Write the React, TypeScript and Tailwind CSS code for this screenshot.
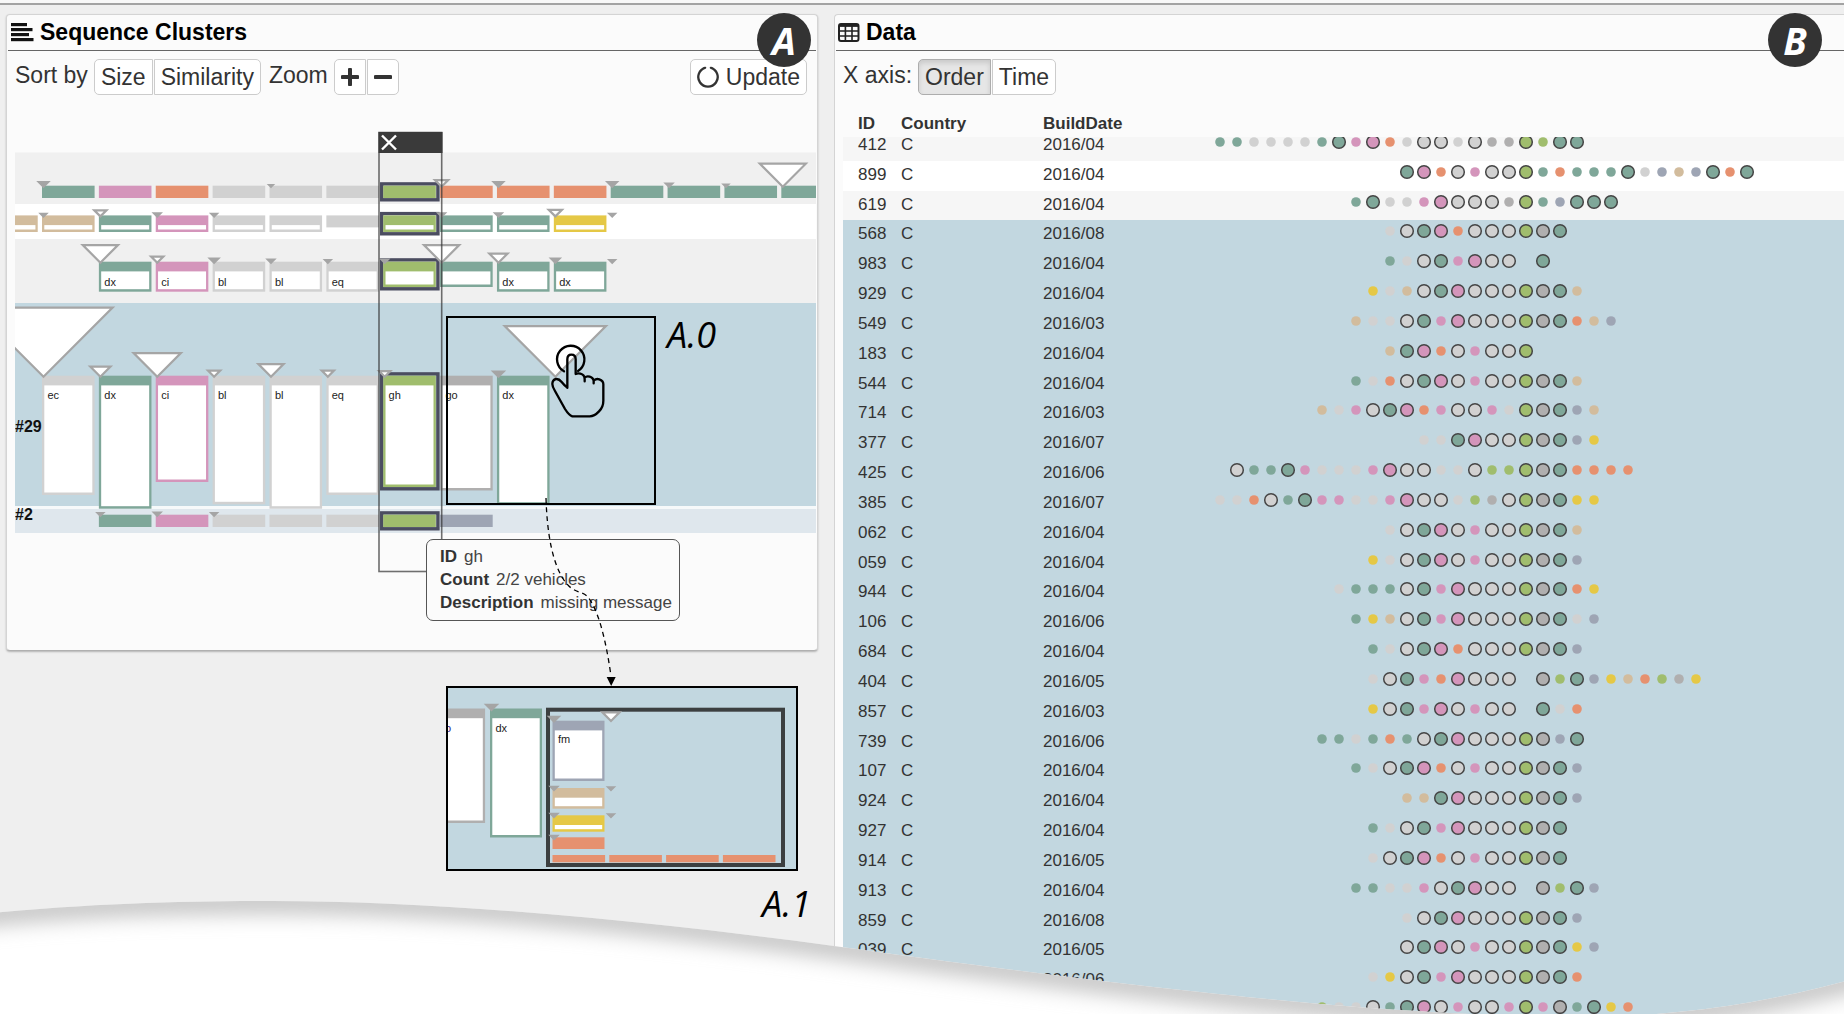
import { useLayoutEffect, useRef } from 'react';

const TEAL = '#7fa799';
const PINK = '#d495bb';
const ORANGE = '#e6916f';
const LIGHT = '#d1d1d1';
const DARK = '#b0afaf';
const GREEN = '#a0bd6d';
const YELLOW = '#e5c846';
const TAN = '#d2bc9d';
const SLATE = '#9ea5b4';

const DOT_COLORS: Record<string, string> = {
  t: TEAL,
  p: PINK,
  o: ORANGE,
  g: LIGHT,
  d: DARK,
  n: GREEN,
  y: YELLOW,
  b: TAN,
  s: SLATE,
};

/* ---------- Sequence cluster chart ---------- */

const COL_PITCH = 56.87;
const COL_WIDTH = 52.6;
const colX = (k: number) => 42 + COL_PITCH * k;

function Marker({ x, y, size }: { x: number; y: number; size: number }) {
  const h = Math.max(size - 2.4, 1);
  return (
    <polygon
      points={`${x - h},${y - h} ${x + h},${y - h} ${x},${y}`}
      fill={size < 8 ? '#a5a5a5' : '#fff'}
      stroke="#a5a5a5"
      strokeWidth={2.2}
    />
  );
}

type BarProps = {
  x: number;
  y: number;
  bottom: number;
  color: string;
  width?: number;
  hollow?: boolean;
  label?: string;
  labelY?: number;
  selected?: boolean;
};

function Bar({ x, y, bottom, color, width = COL_WIDTH, hollow, label, labelY, selected }: BarProps) {
  return (
    <g>
      {selected && (
        <rect
          x={x - 1.5}
          y={y - 1.8}
          width={width + 3.6}
          height={bottom - y + 3.6}
          fill="none"
          stroke="#4b4d60"
          strokeWidth={3.4}
        />
      )}
      <rect x={x} y={y} width={width} height={bottom - y} fill={color} />
      {hollow && (
        <rect x={x + 2.3} y={y + 9.7} width={width - 4.6} height={bottom - y - 12.2} fill="#fff" />
      )}
      {label && (
        <text x={x + 5.4} y={labelY} fontSize={11} fill="#222">
          {label}
        </text>
      )}
    </g>
  );
}

type Item = [col: number, color: string, bottom: number, hollow?: boolean, label?: string];
type Lane = { top: number; labelY?: number; items: Item[]; markers: [col: number, size: number][] };

const LANES: Lane[] = [
  {
    top: 185.7,
    items: [
      [0, TEAL, 198],
      [1, PINK, 198],
      [2, ORANGE, 198],
      [3, LIGHT, 198],
      [4, LIGHT, 198],
      [5, LIGHT, 198],
      [6, GREEN, 198],
      [7, ORANGE, 198],
      [8, ORANGE, 198],
      [9, ORANGE, 198],
      [10, TEAL, 198],
      [11, TEAL, 198],
      [12, TEAL, 198],
      [13, TEAL, 198],
    ],
    markers: [[0, 7], [4, 4], [7, 9], [8, 7], [10, 7], [11, 5.5], [12, 4.5], [13, 25.4]],
  },
  {
    top: 215.4,
    items: [
      [-1, TAN, 232, true],
      [0, TAN, 232, true],
      [1, TEAL, 232, true],
      [2, PINK, 232, true],
      [3, LIGHT, 232, true],
      [4, LIGHT, 232, true],
      [5, LIGHT, 227.4],
      [6, GREEN, 232, true],
      [7, TEAL, 232, true],
      [8, TEAL, 232, true],
      [9, YELLOW, 232, true],
    ],
    markers: [[0, 5], [1, 8.5], [2, 5.5], [3, 5], [7, 5.5], [8, 5.5], [9, 9], [10, 5]],
  },
  {
    top: 261.7,
    labelY: 286,
    items: [
      [1, TEAL, 291.7, true, 'dx'],
      [2, PINK, 291.7, true, 'ci'],
      [3, LIGHT, 291.7, true, 'bl'],
      [4, LIGHT, 291.7, true, 'bl'],
      [5, LIGHT, 291.7, true, 'eq'],
      [6, GREEN, 287, true],
      [7, TEAL, 287, true],
      [8, TEAL, 291.7, true, 'dx'],
      [9, TEAL, 291.7, true, 'dx'],
    ],
    markers: [[1, 20], [2, 8.5], [3, 6.5], [4, 5.5], [5, 5], [6, 5.5], [7, 20], [8, 11.5], [9, 6.5], [10, 5]],
  },
  {
    top: 375.7,
    labelY: 399,
    items: [
      [0, LIGHT, 495, true, 'ec'],
      [1, TEAL, 508.7, true, 'dx'],
      [2, PINK, 482, true, 'ci'],
      [3, LIGHT, 504.3, true, 'bl'],
      [4, LIGHT, 508.7, true, 'bl'],
      [5, LIGHT, 495, true, 'eq'],
      [6, GREEN, 487, true, 'gh'],
      [7, DARK, 490.5, true, 'go'],
      [8, TEAL, 504.7, true, 'dx'],
    ],
    markers: [[0, 71.5], [1, 12.5], [2, 26], [3, 8.5], [4, 15], [5, 8.5], [6, 8], [8, 7.5], [9, 53]],
  },
  {
    top: 514.7,
    items: [
      [1, TEAL, 527],
      [2, PINK, 527],
      [3, LIGHT, 527],
      [4, LIGHT, 527],
      [5, LIGHT, 527],
      [6, GREEN, 527],
      [7, SLATE, 527],
    ],
    markers: [[1, 5], [2, 5.5], [3, 5]],
  },
];

function ClusterChart() {
  return (
    <svg
      viewBox="15 130 801 444"
      width="801"
      height="444"
      className="block font-['Liberation_Sans',sans-serif]"
      role="img"
      aria-label="Sequence clusters"
    >
      <rect x="15" y="152.5" width="801" height="51.5" fill="#f0f0f0" />
      <rect x="15" y="204" width="801" height="35" fill="#fff" />
      <rect x="15" y="239" width="801" height="64" fill="#f0f0f0" />
      <rect x="15" y="303" width="801" height="203" fill="#c2d7e0" />
      <rect x="15" y="506" width="801" height="3" fill="#f6f9fa" />
      <rect x="15" y="509" width="801" height="24" fill="#dfe7ed" />
      {LANES.map((lane) => (
        <g key={lane.top}>
          {[...lane.items]
            .sort((a, b) => Number(a[0] === 6) - Number(b[0] === 6))
            .map(([col, color, bottom, hollow, label]) => (
              <Bar
                key={col}
                x={colX(col)}
                y={lane.top}
                bottom={bottom}
                color={color}
                hollow={hollow}
                label={label}
                labelY={lane.labelY}
                selected={col === 6}
              />
            ))}
          {lane.markers.map(([col, size]) => (
            <Marker key={col} x={colX(col) + 1.5} y={lane.top + 1} size={size} />
          ))}
        </g>
      ))}
      <g fontSize={16} fontWeight={700} fill="#111">
        <text x="15" y="432">#29</text>
        <text x="15" y="520">#2</text>
      </g>
      <rect x="379" y="132.5" width="62.7" height="439" fill="none" stroke="#333" strokeOpacity="0.7" strokeWidth="1.6" />
      <rect x="378.5" y="132" width="64" height="21" fill="#3a3a3a" />
      <path d="M382 135.5 L396 149.5 M396 135.5 L382 149.5" stroke="#fff" strokeWidth="2.4" />
    </svg>
  );
}

/* ---------- Expanded branch inset ---------- */

const INSET_MARKERS: [number, number, number][] = [
  [491.5, 710, 7.5],
  [554, 721.5, 7],
  [611, 721, 11],
  [554, 790, 5.5],
  [611, 790, 5],
  [554, 817, 5.5],
  [611, 817, 5],
  [554, 839, 5.5],
];

function InsetChart() {
  return (
    <svg viewBox="448 688 348 181" width="348" height="181" className="block font-['Liberation_Sans',sans-serif]" role="img" aria-label="Expanded branch">
      <Bar x={432.5} y={708.5} bottom={823} color={DARK} hollow />
      <text x="445" y="732" fontSize={11} fill="#2a1a8a">o</text>
      <Bar x={490} y={708.5} width={52} bottom={837.5} color={TEAL} hollow label="dx" labelY={732} />
      <rect x="548" y="709.7" width="235" height="155.3" fill="none" stroke="#3c3f40" strokeWidth="4" />
      <Bar x={552.5} y={720.7} width={52} bottom={781} color={SLATE} hollow label="fm" labelY={743} />
      <Bar x={552.5} y={788} width={52} bottom={808.7} color={TAN} hollow />
      <Bar x={552.5} y={815.3} width={52} bottom={831.7} color={YELLOW} hollow />
      <Bar x={552.5} y={837.3} width={52} bottom={849} color={ORANGE} />
      {[0, 1, 2, 3].map((i) => (
        <Bar key={i} x={552.5 + 56.8 * i} y={855} bottom={862.3} color={ORANGE} />
      ))}
      {INSET_MARKERS.map(([x, y, size]) => (
        <Marker key={`${x}-${y}`} x={x} y={y} size={size} />
      ))}
    </svg>
  );
}

/* ---------- Icons ---------- */

function BarsIcon() {
  return (
    <svg width="23" height="19" viewBox="0 0 23 19" fill="#111" aria-hidden="true">
      <rect x="0" y="0" width="16" height="3.2" />
      <rect x="0" y="5" width="21.5" height="3.2" />
      <rect x="0" y="10" width="18" height="3.2" />
      <rect x="0" y="15" width="22.5" height="3.2" />
    </svg>
  );
}

function GridIcon() {
  return (
    <svg width="22" height="19" viewBox="0 0 22 19" fill="none" stroke="#222" aria-hidden="true">
      <rect x="1" y="1" width="19.5" height="17" rx="2" strokeWidth="2" />
      <path d="M1 2.6H20.5" strokeWidth="2.6" />
      <path d="M1 8H20.5M1 13H20.5M7.4 2V18M14 2V18" strokeWidth="1.6" />
    </svg>
  );
}

function RefreshIcon() {
  return (
    <svg width="22" height="22" viewBox="0 0 22 22" fill="none" stroke="#333" strokeWidth="2.3" aria-hidden="true">
      <path d="M8.6 1.6A9.7 9.7 0 1 0 13.4 1.6" />
      <path d="M6.6 1.6H9.2M12.8 1.6H15.4" strokeWidth="1.4" />
    </svg>
  );
}

function PlusIcon() {
  return (
    <svg width="18" height="18" viewBox="0 0 18 18" aria-hidden="true">
      <path d="M9 1.5V16.5M1.5 9H16.5" stroke="#333" strokeWidth="4" strokeLinecap="round" />
    </svg>
  );
}

function MinusIcon() {
  return (
    <svg width="18" height="18" viewBox="0 0 18 18" aria-hidden="true">
      <path d="M1.5 9H16.5" stroke="#333" strokeWidth="4" strokeLinecap="round" />
    </svg>
  );
}

function TouchIcon() {
  return (
    <svg width="60" height="76" viewBox="535 160 180 228" fill="none" stroke="#000" strokeWidth="7" strokeLinejoin="round" strokeLinecap="round" aria-hidden="true">
      <path d="M583 242A41 41 0 1 1 625 241" />
      <path d="M593 291V206Q593 192 605 192Q618 192 618 206V250Q623 247 632 249Q645 252 645 266V272M645 261Q651 255 660 258Q672 262 672 272V278M673 269Q680 263 689 266Q701 270 701 281V330Q701 349 688 362Q674 377 660 377H608Q598 374 586 355L556 301Q548 288 548 280Q548 268 559 265Q568 264 576 274Q584 284 593 291" />
    </svg>
  );
}

/* ---------- Shared pieces ---------- */

function Badge({ children }: { children: string }) {
  return (
    <span className="flex size-[54px] items-center justify-center rounded-full bg-[#333] font-['Open_Sans',sans-serif] text-[38px] leading-none font-bold text-white italic">
      {children}
    </span>
  );
}

const BUTTON = 'flex h-9 items-center border border-[#ccc] bg-white px-[6px] text-[#333]';

/* ---------- Data table ---------- */

// Each letter is one event; a capital marks an event on the main path.
const ROWS: [id: string, country: string, date: string, start: number, events: string][] = [
  ['412', 'C', '2016/04', 0, 'ttggggtTpPogGGgGddNnTT'],
  ['899', 'C', '2016/04', 11, 'TPoGpGGNtotttTgsbsToT'],
  ['619', 'C', '2016/04', 8, 'tTggpPGGGdNtsTTT'],
  ['568', 'C', '2016/08', 10, 'gGTPoGGGNDT'],
  ['983', 'C', '2016/04', 10, 'tgGTpPGG T'],
  ['929', 'C', '2016/04', 9, 'ygbGTPGGGNDTb'],
  ['549', 'C', '2016/03', 8, 'bggGTpPGGGNDTobs'],
  ['183', 'C', '2016/04', 10, 'bTPoGpGGN'],
  ['544', 'C', '2016/04', 8, 'tgoGTPGpGGNDTb'],
  ['714', 'C', '2016/03', 6, 'bgpGTPopGGpgNDTsb'],
  ['377', 'C', '2016/07', 12, 'ggTPGGNDTsy'],
  ['425', 'C', '2016/06', 1, 'GttTpgggpPGGggGnnNDToooo'],
  ['385', 'C', '2016/07', 0, 'ggoGtTppggpPGGgndGNDTyy'],
  ['062', 'C', '2016/04', 10, 'gGTPGpGGNDTb'],
  ['059', 'C', '2016/04', 9, 'ygGTPGpGGNDTs'],
  ['944', 'C', '2016/04', 7, 'gtttGTpPGGGNDToy'],
  ['106', 'C', '2016/06', 8, 'tybGTpPGGGNDTgs'],
  ['684', 'C', '2016/04', 9, 'tgGTPoGGGNDTs'],
  ['404', 'C', '2016/05', 9, 'gGTpoPGGG DnTsybondy'],
  ['857', 'C', '2016/03', 9, 'yGTpPGpGG Tgo'],
  ['739', 'C', '2016/06', 6, 'ttgtotGTPGGGNDsT'],
  ['107', 'C', '2016/04', 8, 'tgGTPoGpGGNDTs'],
  ['924', 'C', '2016/04', 11, 'bbTPGGGNDTs'],
  ['927', 'C', '2016/04', 9, 'tgGTpPGGGNDT'],
  ['914', 'C', '2016/05', 9, 'gGTPoGpGGNDT'],
  ['913', 'C', '2016/04', 8, 'ttggpGTPGG DnTs'],
  ['859', 'C', '2016/08', 11, 'gGTPGGGNDTs'],
  ['039', 'C', '2016/05', 11, 'GTPGpGGNDTys'],
  ['', '', '2016/06', 9, 'gyGTpPGGGNDTo'],
  ['', '', '', 6, 'nggGtTPGpGGpNpDtTyo'],
];

function EventDots({ start, events }: { start: number; events: string }) {
  return (
    <svg width="100%" height="28" className="block" aria-hidden="true">
      {[...events].map((e, i) => {
        if (e === ' ') return null;
        const main = e !== e.toLowerCase();
        return (
          <circle
            key={i}
            cx={17 + 17 * (start + i)}
            cy={11}
            r={main ? 6.3 : 4.8}
            fill={DOT_COLORS[e.toLowerCase()]}
            stroke={main ? '#454545' : 'none'}
            strokeWidth={1.5}
          />
        );
      })}
    </svg>
  );
}

function DataTable() {
  const scroller = useRef<HTMLDivElement>(null);
  useLayoutEffect(() => {
    if (scroller.current) scroller.current.scrollTop = 6;
  }, []);
  return (
    <div ref={scroller} className="mt-4 ml-2 min-h-0 flex-1 overflow-y-auto [scrollbar-width:none]">
      <table className="h-[921px] w-full table-fixed border-collapse text-left text-[17px] text-[#333]">
        <colgroup>
          <col className="w-[58px]" />
          <col className="w-[142px]" />
          <col className="w-[160px]" />
          <col />
        </colgroup>
        <thead>
          <tr className="h-[26px] leading-[24px]">
            <th className="sticky top-0 bg-[#fbfbfb] p-0 pl-[15px]">ID</th>
            <th className="sticky top-0 bg-[#fbfbfb] p-0">Country</th>
            <th className="sticky top-0 bg-[#fbfbfb] p-0">BuildDate</th>
            <th className="sticky top-0 bg-[#fbfbfb] p-0" aria-label="Events" />
          </tr>
        </thead>
        <tbody>
          {ROWS.map(([id, country, date, start, events], i) => (
            <tr
              key={i}
              className={
                i > 2
                  ? 'bg-[#c2d7e0] align-top leading-[30px]'
                  : 'align-top leading-[30px] odd:bg-[#f6f6f6] even:bg-white'
              }
            >
              <td className="h-7 p-0 pl-[15px] leading-[28px]">{id}</td>
              <td className="p-0 leading-[28px]">{country}</td>
              <td className="p-0 leading-[28px]">{date}</td>
              <td className="p-0">
                <EventDots start={start} events={events} />
              </td>
            </tr>
          ))}
        </tbody>
      </table>
    </div>
  );
}

/* ---------- Page ---------- */

function ClustersPanel() {
  return (
    <section className="relative rounded-[4px] border border-[#d4d4d4] border-b-[#b0b0b0] bg-[#fbfbfb] pb-[76px] shadow-[0_1px_2px_rgba(0,0,0,0.25)]">
      <header className="mx-px flex h-[36px] items-center gap-[6px] border-b border-[#666] pb-px pl-[3px]">
        <BarsIcon />
        <h2 className="text-[23px] leading-[34px] font-bold text-black">Sequence Clusters</h2>
      </header>
      <div className="flex h-[44px] items-center gap-[6px] pt-[8px] pr-[10px] pl-2 text-[23px] leading-[34px] text-[#333]">
        <span className="pb-[4px]">Sort by</span>
        <div className="flex gap-px">
          <button className={`${BUTTON} rounded-l-[5px]`}>Size</button>
          <button className={`${BUTTON} rounded-r-[5px]`}>Similarity</button>
        </div>
        <span className="pb-[4px] pl-[2px]">Zoom</span>
        <div className="flex gap-px">
          <button className={`${BUTTON} rounded-l-[5px]`} aria-label="Zoom in">
            <PlusIcon />
          </button>
          <button className={`${BUTTON} rounded-r-[5px]`} aria-label="Zoom out">
            <MinusIcon />
          </button>
        </div>
        <button className={`${BUTTON} ml-auto gap-[7px] rounded-[5px]`}>
          <RefreshIcon />
          Update
        </button>
      </div>
      <div className="mt-[35px] overflow-hidden pl-[8px]">
        <ClusterChart />
      </div>
      <div className="absolute -top-[2px] right-[6px]">
        <Badge>A</Badge>
      </div>
    </section>
  );
}

function Annotations() {
  return (
    <>
      <div className="absolute top-[316px] left-[446px] h-[189px] w-[210px] border-2 border-black" />
      <div className="absolute top-[344px] left-[548px]">
        <TouchIcon />
      </div>
      <div className="absolute top-[310px] left-[667px] font-['Open_Sans',sans-serif] text-[36px] leading-[50px] text-black italic">A.0</div>
      <dl className="absolute top-[539px] left-[426px] w-[254px] rounded-[7px] border border-[#555] bg-[#fbfbfb] pt-[5px] pb-[6px] pl-[13px] text-[17px] leading-[23px] text-[#444]">
        <div className="flex gap-[7px]">
          <dt className="font-bold text-[#333]">ID</dt>
          <dd>gh</dd>
        </div>
        <div className="flex gap-[7px]">
          <dt className="font-bold text-[#333]">Count</dt>
          <dd>2/2 vehicles</dd>
        </div>
        <div className="flex gap-[7px]">
          <dt className="font-bold text-[#333]">Description</dt>
          <dd>missing message</dd>
        </div>
      </dl>
      <div className="absolute top-[686px] left-[446px] border-2 border-black bg-[#c2d7e0]">
        <InsetChart />
      </div>
      <svg className="absolute top-[495px] left-[530px]" width="100" height="195" viewBox="530 495 100 195" aria-hidden="true">
        <path
          d="M546 498C547 532 552 560 562 577S580 590 587 596C598 608 606 640 611 676"
          fill="none"
          stroke="#000"
          strokeWidth="1.3"
          strokeDasharray="5 4"
        />
        <polygon points="606.7,677 615.7,677 611.2,686" />
      </svg>
      <div className="absolute top-[879px] left-[762px] font-['Open_Sans',sans-serif] text-[36px] leading-[50px] text-black italic">A.1</div>
    </>
  );
}

function DataPanel() {
  return (
    <section className="relative flex min-h-0 flex-col rounded-tl-[4px] border-t border-l border-[#d4d4d4] bg-[#fbfbfb]">
      <header className="ml-px flex h-[36px] shrink-0 items-center gap-[6px] border-b border-[#666] pb-px pl-[2px]">
        <GridIcon />
        <h2 className="text-[23px] leading-[34px] font-bold text-black">Data</h2>
      </header>
      <div className="flex h-[44px] shrink-0 items-center gap-[6px] pt-[8px] pl-2 text-[23px] leading-[34px] text-[#333]">
        <span className="pb-[4px]">X axis:</span>
        <div className="flex gap-px">
          <button
            aria-pressed="true"
            className="flex h-9 items-center rounded-l-[5px] border border-[#adadad] bg-[#e6e6e6] px-[6px] shadow-[inset_0_3px_5px_rgba(0,0,0,0.125)]"
          >
            Order
          </button>
          <button className={`${BUTTON} rounded-r-[5px]`}>Time</button>
        </div>
      </div>
      <DataTable />
      <div className="absolute -top-[2px] right-[22px]">
        <Badge>B</Badge>
      </div>
    </section>
  );
}

function PageCurl() {
  const edge =
    'M-40 916C90 903 180 901 272 901C440 901 640 920 834 946C950 962 1080 979 1200 992C1300 1003 1400 1012 1540 1017C1660 1020 1770 1005 1884 970';
  return (
    <svg
      className="pointer-events-none absolute inset-x-0 bottom-0 w-full"
      height="134"
      viewBox="0 880 1844 134"
      preserveAspectRatio="none"
      aria-hidden="true"
    >
      <defs>
        <clipPath id="curl">
          <path d={`${edge}V1060H-40Z`} />
        </clipPath>
        <filter id="soft" filterUnits="userSpaceOnUse" x="-60" y="840" width="1980" height="260">
          <feGaussianBlur stdDeviation="10" />
        </filter>
      </defs>
      <g clipPath="url(#curl)">
        <rect x="-40" y="880" width="1924" height="180" fill="#fff" />
        <path d={edge} fill="none" stroke="#c6c6c6" strokeWidth="26" filter="url(#soft)" />
      </g>
    </svg>
  );
}

export default function App() {
  return (
    <div className="relative flex h-screen flex-col overflow-hidden bg-[#efefef] font-['Liberation_Sans',Arial,sans-serif]">
      <div className="h-[5px] shrink-0 border-b-2 border-[#a3a3a3] bg-[#f8f8f8]" />
      <main className="grid min-h-0 flex-1 grid-cols-[812fr_1010fr] gap-4 pt-[9px] pl-[6px]">
        <div>
          <ClustersPanel />
        </div>
        <DataPanel />
      </main>
      <Annotations />
      <PageCurl />
    </div>
  );
}
